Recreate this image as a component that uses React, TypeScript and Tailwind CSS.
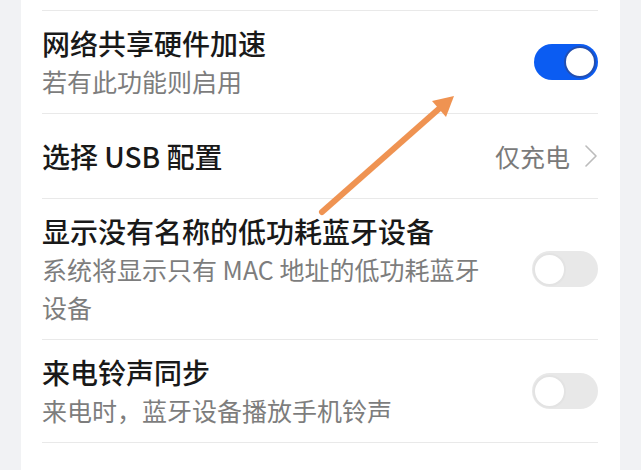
import React from "react";

type Row =
  | { kind: "toggle"; title: string; desc: string; on: boolean }
  | { kind: "link"; title: string; value: string };

const ROWS: Row[] = [
  { kind: "toggle", title: "网络共享硬件加速", desc: "若有此功能则启用", on: true },
  { kind: "link", title: "选择 USB 配置", value: "仅充电" },
  {
    kind: "toggle",
    title: "显示没有名称的低功耗蓝牙设备",
    desc: "系统将显示只有 MAC 地址的低功耗蓝牙设备",
    on: false,
  },
  { kind: "toggle", title: "来电铃声同步", desc: "来电时，蓝牙设备播放手机铃声", on: false },
];

function Toggle({ on }: { on: boolean }) {
  if (on) {
    return (
      <div className="flex h-[36px] w-[64px] shrink-0 items-center justify-end rounded-full bg-[#0b5cf2] pr-[2px]">
        <div className="h-[32px] w-[32px] rounded-full border-[2px] border-[#234fb0] bg-white" />
      </div>
    );
  }
  return (
    <div className="flex h-[36px] w-[66px] shrink-0 items-center rounded-full bg-[#e8e8e8] pl-[1px]">
      <div className="h-[33px] w-[33px] rounded-full border-[2px] border-[#e3e3e3] bg-white" />
    </div>
  );
}

function Chevron() {
  return (
    <svg width="14" height="22" viewBox="0 0 14 22" className="shrink-0">
      <polyline
        points="2,1 12,11 2,21"
        fill="none"
        stroke="#bcbcbc"
        strokeWidth="1.6"
        strokeLinejoin="round"
        strokeLinecap="round"
      />
    </svg>
  );
}

export default function App() {
  return (
    <div className="relative h-[470px] w-[641px] overflow-hidden bg-[#f1f2f4] font-['Noto_Sans_CJK_SC','Noto_Sans',sans-serif]">
      <div className="mx-[21px] h-full w-[599px] bg-white pl-[21px] pr-[22px]">
        <div className="h-[10px]" />
        {ROWS.map((row, i) =>
          row.kind === "toggle" ? (
            <div
              key={i}
              className={`flex items-center border-t border-[#e9e9e9] py-[13px] ${
                i === ROWS.length - 1 ? "border-b" : ""
              }`}
            >
              <div className="min-w-0 flex-1 pr-[40px]">
                <p className="text-[28px] font-medium leading-[38px] text-[#191919]">{row.title}</p>
                <p className="text-[25px] leading-[38px] text-[#7d7d7d]">{row.desc}</p>
              </div>
              <Toggle on={row.on} />
            </div>
          ) : (
            <div key={i} className="flex items-center border-t border-[#e9e9e9] py-[24px]">
              <p className="flex-1 text-[28px] font-medium leading-[36px] text-[#191919]">{row.title}</p>
              <span className="mr-[14px] text-[25px] leading-[36px] text-[#7a7a7a]">{row.value}</span>
              <Chevron />
            </div>
          )
        )}
      </div>

      {/* annotation arrow laid over the list */}
      <svg
        className="pointer-events-none absolute left-0 top-0"
        width="641"
        height="470"
        viewBox="0 0 641 470"
      >
        <line x1="322" y1="212" x2="441" y2="107" stroke="#ef9352" strokeWidth="6" strokeLinecap="round" />
        <polygon points="454,96 446,117 432,101" fill="#ef9352" />
      </svg>
    </div>
  );
}
